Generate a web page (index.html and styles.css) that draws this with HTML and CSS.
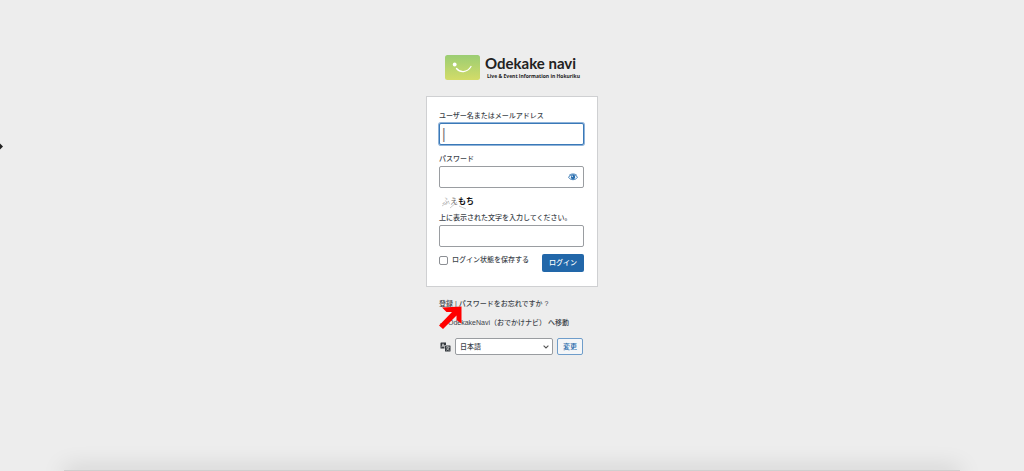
FILE: index.html
```html
<!DOCTYPE html>
<html lang="ja">
<head>
  <meta charset="UTF-8">
  <meta name="viewport" content="width=device-width, initial-scale=1.0">
  <title>ログイン ‹ OdekakeNavi（おでかけナビ）</title>
  <link rel="stylesheet" href="styles.css">
</head>
<body>
  <div class="login">
    <h1 class="logo">
      <svg class="logo-mark" viewBox="0 0 35 25" aria-hidden="true">
        <defs>
          <linearGradient id="green" x1="0" y1="0" x2="0" y2="1">
            <stop offset="0" stop-color="#9bcd73"/>
            <stop offset="1" stop-color="#d3dc68"/>
          </linearGradient>
        </defs>
        <rect width="35" height="25" rx="2.5" fill="url(#green)"/>
        <circle cx="9.7" cy="9.5" r="1.9" fill="#fff"/>
        <path d="M11.5 13.5c3.5 4.300 10.500 4.500 14.500-2" fill="none" stroke="#fff" stroke-width="1.300" stroke-linecap="round"/>
      </svg>
      <span class="logo-text">
        <span class="logo-name">Odekake navi</span>
        <span class="logo-sub">Live &amp; Event Information in Hokuriku</span>
      </span>
    </h1>

    <form class="login-form">
      <label for="user">ユーザー名またはメールアドレス</label>
      <input type="text" id="user" class="input focused" value="|">

      <label for="pass">パスワード</label>
      <div class="password">
        <input type="password" id="pass" class="input">
        <button type="button" class="show-pass" aria-label="パスワードを表示">
          <svg viewBox="0 0 20 16" aria-hidden="true">
            <path d="M1 8.500C5 2 15 2 19 8.500C15 15 5 15 1 8.500Z" fill="#fff" stroke="#2a6fb0" stroke-width="1.800"/>
            <path d="M2 5C6 .8 14 .8 18 5" fill="none" stroke="#2a6fb0" stroke-width="1.500"/>
            <circle cx="10" cy="8" r="4.500" fill="#2a6fb0"/>
            <circle cx="8.500" cy="6.500" r="1.300" fill="#fff"/>
          </svg>
        </button>
      </div>

      <div class="captcha">
        <span class="faint">ふ</span><span class="mid">え</span><span>もち</span>
        <svg class="scratch" viewBox="0 0 36 14" aria-hidden="true">
          <path d="M3 9L10 4M11 11L18 5M20 9L27 12" fill="none" stroke="#999" stroke-width=".5"/>
        </svg>
      </div>
      <label for="captcha">上に表示された文字を入力してください。</label>
      <input type="text" id="captcha" class="input">

      <div class="submit-row">
        <label class="remember" for="remember"><input type="checkbox" id="remember">ログイン状態を保存する</label>
        <button type="submit" class="button-primary">ログイン</button>
      </div>
    </form>

    <p class="nav"><a href="#">登録</a> | <a href="#">パスワードをお忘れですか ?</a></p>
    <p class="nav"><a href="#">← OdekakeNavi（おでかけナビ） へ移動</a></p>

    <form class="language">
      <label for="lang" aria-label="言語">
        <svg class="translate" viewBox="0 0 22 20" aria-hidden="true">
          <path d="M2 1H12V6H9V13H1V2Z" fill="#32373c"/>
          <path d="M3.500 10.500L6 3.500L8.500 10.500M4.500 8H7.500" fill="none" stroke="#eee" stroke-width="1.400"/>
          <rect x="10" y="7" width="11" height="12" rx="1" fill="#32373c"/>
          <path d="M12 10H19M15.500 8.500V10M18 10C17.500 13 15 15.500 12.500 16.500M13.500 11.500C14.500 14 16.500 16 19 16.500" fill="none" stroke="#eee" stroke-width="1.300"/>
        </svg>
      </label>
      <div class="select-wrap">
        <select id="lang">
          <option>日本語</option>
          <option>English</option>
        </select>
        <svg class="chevron" viewBox="0 0 6 4" aria-hidden="true">
          <path d="M.6.6L3 3L5.400.6" fill="none" stroke="#555" stroke-width="1.100"/>
        </svg>
      </div>
      <button type="button" class="button-secondary">変更</button>
    </form>

    <svg class="pointer" viewBox="0 0 24 24" aria-hidden="true">
      <path d="M4 1.500L23.500.5V17.500L18.500 14V9.500L5 23L1 19.500L14 6H8.500Z" fill="#f00"/>
    </svg>
  </div>

  <div class="side-mark"></div>
  <div class="bottom-shadow"></div>
</body>
</html>
```

FILE: styles.css
```css
* {
  box-sizing: border-box;
}
body {
  margin: 0;
  min-height: 100vh;
  overflow: hidden;
  background: #ededed;
  color: #3c434a;
  font-family: "Liberation Sans", "Noto Sans CJK JP", sans-serif;
  font-size: 7px;
  font-weight: 500;
  line-height: 10px;
}
input, button, select {
  font: inherit;
  color: inherit;
  margin: 0;
}
.login {
  position: relative;
  width: 172px;
  margin: 0 auto;
  padding-top: 54px;
}
.logo {
  display: flex;
  gap: 5px;
  height: 26px;
  margin: 0 0 16px;
  padding-left: 19px;
  color: #222;
}
.logo-mark {
  width: 35px;
  height: 25px;
  margin-top: 1px;
}
.logo-text {
  display: flex;
  flex-direction: column;
  white-space: nowrap;
}
.logo-name {
  font-family: Lato, sans-serif;
  font-size: 15px;
  line-height: 18px;
}
.logo-sub {
  padding-left: 2px;
  font-family: "Open Sans", sans-serif;
  font-size: 5px;
  line-height: 8px;
}
.login-form {
  padding: 14px 13px 14px 12px;
  background: #fff;
  border: 1px solid #cfd0d2;
}
.login-form label {
  display: block;
  margin-bottom: 2px;
  white-space: nowrap;
}
.input {
  display: block;
  width: 100%;
  height: 22px;
  margin-bottom: 9px;
  padding: 0 3px;
  border: 1px solid #9a9da1;
  border-radius: 2px;
  background: #fff;
  outline: none;
}
.focused {
  border-color: #3a79b8;
  box-shadow: 0 0 0 1px #8fb3d9;
  padding: 0 2px;
  font-size: 14px;
  color: #777;
}
.password {
  position: relative;
}
.show-pass {
  position: absolute;
  top: 0;
  right: 0;
  display: flex;
  align-items: center;
  justify-content: center;
  width: 22px;
  height: 22px;
  padding: 0;
  border: 0;
  background: none;
}
.show-pass svg {
  width: 10px;
  height: 8px;
}
.captcha {
  position: relative;
  display: flex;
  height: 14px;
  margin-bottom: 2px;
  padding-left: 3px;
  color: #111;
  font-size: 8px;
  line-height: 10px;
  font-weight: bold;
}
.captcha .faint {
  color: #bbb;
  font-weight: normal;
}
.captcha .mid {
  color: #666;
  font-weight: normal;
}
.scratch {
  position: absolute;
  top: 0;
  left: 0;
  width: 36px;
  height: 14px;
}
.submit-row {
  display: flex;
  justify-content: space-between;
  align-items: flex-start;
  margin-top: -2px;
}
.login-form .remember {
  display: flex;
  align-items: center;
  gap: 4px;
  margin: 1px 0 0;
}
.remember input {
  appearance: none;
  width: 9px;
  height: 9px;
  border: 1px solid #8c8f94;
  border-radius: 2px;
  background: #fff;
}
.button-primary {
  width: 42px;
  height: 18px;
  padding: 0;
  border: 0;
  border-radius: 2px;
  background: #2267a9;
  color: #fff;
}
.nav {
  margin: 0 0 9px;
  padding-left: 13px;
  white-space: nowrap;
}
.login-form + .nav {
  margin-top: 12px;
}
.nav a {
  color: inherit;
  text-decoration: none;
}
.language {
  display: flex;
  align-items: center;
  gap: 4px;
  margin-top: 10px;
  padding-left: 14px;
}
.language label,
.translate {
  display: block;
  width: 11px;
  height: 10px;
}
.select-wrap {
  position: relative;
}
select {
  appearance: none;
  display: block;
  width: 98px;
  height: 17px;
  padding: 0 4px;
  border: 1px solid #999ca0;
  border-radius: 2px;
  background: #fff;
}
.chevron {
  position: absolute;
  top: 7px;
  right: 4px;
  width: 6px;
  height: 4px;
  pointer-events: none;
}
.button-secondary {
  width: 26px;
  height: 17px;
  padding: 0;
  border: 1px solid #6f9dca;
  border-radius: 2px;
  background: #f4f6f8;
  color: #2267a9;
}
/* red arrow laid over the links */
.pointer {
  position: absolute;
  top: 306px;
  left: 12px;
  width: 24px;
  height: 24px;
}
.side-mark {
  position: fixed;
  top: 144px;
  left: -3px;
  width: 5px;
  height: 5px;
  background: #222;
  transform: rotate(45deg);
}
.bottom-shadow {
  position: fixed;
  right: 64px;
  bottom: -9px;
  left: 64px;
  height: 10px;
  background: #cfcfcf;
  box-shadow: 0 0 24px rgba(0, 0, 0, 0.2);
}
```
